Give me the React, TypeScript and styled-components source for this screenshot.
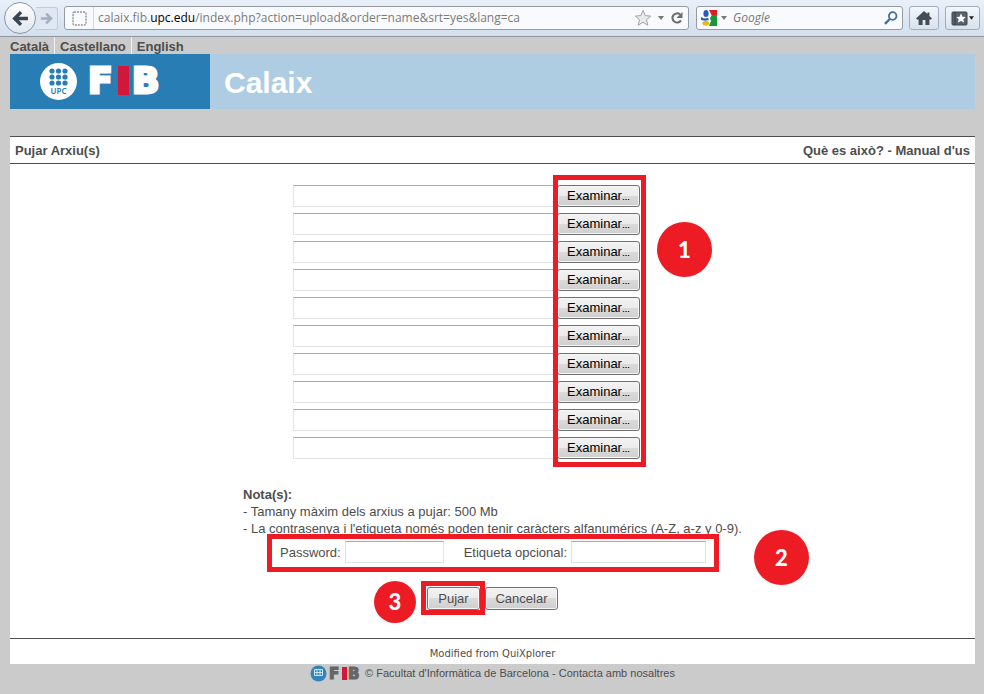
import React from "react";
import styled, { createGlobalStyle, css } from "styled-components";

const GlobalStyle = createGlobalStyle`
  * { box-sizing: border-box; }
  body {
    margin: 0;
    background: #cbcbcb;
    color: #4d4d4d;
    font: 13px/17px "Liberation Sans", Arial, sans-serif;
  }
  button, input { font: inherit; color: inherit; margin: 0; }
  a { color: inherit; text-decoration: none; }
`;

/* ---------- browser toolbar ---------- */

const Toolbar = styled.header`
  display: flex;
  align-items: center;
  height: 37px;
  padding: 0 4px;
  background: linear-gradient(#e9f0f9, #d3dfee);
  border-bottom: 1px solid #8d97a3;
`;

const BackButton = styled.button`
  display: grid;
  place-items: center;
  flex: none;
  width: 32px;
  height: 32px;
  padding: 0;
  border: 1px solid #8b95a5;
  border-radius: 50%;
  background: linear-gradient(#ffffff, #dfe6f0);
`;

const ForwardButton = styled.button`
  display: grid;
  place-items: center;
  flex: none;
  width: 22px;
  height: 23px;
  margin-right: 6px;
  padding: 0;
  border: 1px solid #c0cad8;
  border-left: 0;
  border-radius: 0 3px 3px 0;
  background: #dfe7f2;
`;

const Field = styled.div`
  display: flex;
  align-items: center;
  height: 24px;
  border: 1px solid #949ba5;
  border-radius: 3px;
  background: #f8fafd;
`;

const AddressField = styled(Field)`
  flex: 1;
  min-width: 0;
`;

const SearchField = styled(Field)`
  width: 207px;
  margin: 0 6px 0 7px;
  padding: 0 4px;
`;

const SiteIdentity = styled.span`
  display: grid;
  place-items: center;
  width: 29px;
  height: 22px;
  border-right: 1px solid #d5dae1;
`;

const Address = styled.div`
  flex: 1;
  min-width: 0;
  padding-left: 4px;
  overflow: hidden;
  white-space: nowrap;
  color: #7b7b7b;
  font: 12px/20px "Open Sans", "Noto Sans", sans-serif;
  b { font-weight: 400; color: #000; }
`;

const AddressIcons = styled.div`
  display: flex;
  align-items: center;
  gap: 6px;
  padding-right: 4px;
`;

const CaretSlot = styled.span`
  display: flex;
  margin-left: 4px;
`;

const SearchInput = styled.input`
  flex: 1;
  min-width: 0;
  padding: 0 0 0 6px;
  border: 0;
  background: none;
  outline: 0;
  && { font: italic 12px/20px "Open Sans", "Noto Sans", sans-serif; }
  &::placeholder { color: #777; opacity: 1; }
`;

const IconButton = styled.button`
  display: grid;
  place-items: center;
  flex: none;
  padding: 0;
  border: 0;
  background: none;
`;

const ToolButton = styled.button<{ $wide?: boolean }>`
  display: flex;
  align-items: center;
  justify-content: center;
  gap: 1px;
  flex: none;
  width: ${(p) => (p.$wide ? 35 : 30)}px;
  height: 24px;
  margin-right: ${(p) => (p.$wide ? 0 : 6)}px;
  padding: 0;
  border: 1px solid #a3adba;
  border-radius: 3px;
  background: linear-gradient(#f3f7fb, #d8e1ed);
`;

const Arrow = ({ color, size, flip }: { color: string; size: number; flip?: boolean }) => (
  <svg width={size} height={size} viewBox="0 0 16 16" fill="none" stroke={color} strokeWidth="3.2">
    <path d={flip ? "M1 8h12M7.5 2l6 6-6 6" : "M15 8H3M8.5 2l-6 6 6 6"} />
  </svg>
);

const Caret = ({ color = "#777", size = 6 }: { color?: string; size?: number }) => (
  <svg width={size} height="4" viewBox="0 0 6 4">
    <path d="M0 0h6L3 4z" fill={color} />
  </svg>
);

const StarIcon = () => (
  <svg width="18" height="18" viewBox="0 0 18 18">
    <path
      d="M9 1.5l2.2 5.1 5.5.5-4.2 3.6 1.3 5.5L9 13.3l-4.8 2.9 1.3-5.5L1.3 7.1l5.500-.5z"
      fill="#e8eaed"
      stroke="#a3a3a3"
    />
  </svg>
);

const ReloadIcon = () => (
  <svg width="14" height="14" viewBox="0 0 14 14">
    <path d="M10 3.4A4.6 4.6 0 1 0 11 9.4" fill="none" stroke="#6c6c6c" strokeWidth="2" />
    <path d="M12.5 1v6h-6z" fill="#6c6c6c" />
  </svg>
);

const GoogleIcon = () => (
  <svg width="16" height="16" viewBox="0 0 16 16">
    <path d="M0 0h16v16H0z" fill="#fff" />
    <path d="M8 0h8v6h-5z" fill="#db1f1f" />
    <path d="M11 5l5 0v11H8l2-5-1-3z" fill="#14983a" />
    <ellipse cx="5" cy="3.500" rx="2.600" ry="3.500" fill="#2a5bb8" />
    <path d="M0 7l3 1.500 4-.5 1 2-4 .8L0 10z" fill="#2a5bb8" />
    <ellipse cx="4.800" cy="13.300" rx="3.400" ry="2.500" fill="#e8b820" />
  </svg>
);

const SearchIcon = () => (
  <svg width="14" height="14" viewBox="0 0 14 14" fill="none" stroke="#3d6ea8">
    <circle cx="8.7" cy="5" r="3.8" strokeWidth="1.8" />
    <path d="M5.8 8L1 12.8" strokeWidth="2.4" />
  </svg>
);

const HomeIcon = () => (
  <svg width="16" height="14" viewBox="0 0 16 14" fill="#434b55">
    <path d="M8 0L0 7.4l1 1.2h1.6V14h4V9h2.8v5h4V8.600H15l1-1.200-2.600-2.400V1.500h-2v1.600z" />
  </svg>
);

const BookmarksIcon = () => (
  <svg width="17" height="15" viewBox="0 0 17 15">
    <rect x="1" y="1" width="15" height="13" rx="1" fill="#59626d" stroke="#3c444e" />
    <path d="M4 1v13" stroke="#353c45" />
    <path d="M10 2.500l1.500 3.200 3.300.3-2.500 2.200.8 3.400L10 9.900l-3.100 1.700.8-3.400L5.200 6l3.300-.3z" fill="#fff" />
  </svg>
);

const BrowserToolbar = () => (
  <Toolbar>
    <BackButton aria-label="Back"><Arrow color="#3a444f" size={17} /></BackButton>
    <ForwardButton aria-label="Forward"><Arrow color="#a3afbf" size={13} flip /></ForwardButton>
    <AddressField>
      <SiteIdentity>
        <svg width="15" height="15" viewBox="0 0 15 15">
          <rect x="1" y="1" width="13" height="13" rx="1" fill="none" stroke="#666" strokeDasharray="2 1" />
        </svg>
      </SiteIdentity>
      <Address>
        calaix.fib.<b>upc.edu</b>/index.php?action=upload&amp;order=name&amp;srt=yes&amp;lang=ca
      </Address>
      <AddressIcons>
        <IconButton aria-label="Bookmark"><StarIcon /></IconButton>
        <Caret />
        <IconButton aria-label="Reload"><ReloadIcon /></IconButton>
      </AddressIcons>
    </AddressField>
    <SearchField>
      <GoogleIcon />
      <CaretSlot><Caret /></CaretSlot>
      <SearchInput aria-label="Search" placeholder="Google" />
      <IconButton aria-label="Go"><SearchIcon /></IconButton>
    </SearchField>
    <ToolButton aria-label="Home"><HomeIcon /></ToolButton>
    <ToolButton $wide aria-label="Bookmarks"><BookmarksIcon /><Caret color="#222" size={5} /></ToolButton>
  </Toolbar>
);

/* ---------- page ---------- */

const Page = styled.div`
  padding: 0 9px 0 10px;
`;

const Languages = styled.nav`
  display: flex;
  height: 17px;
  font-weight: 700;
  line-height: 19px;
  a + a {
    margin-left: 5px;
    padding-left: 5px;
    border-left: 1px solid #f2f2f2;
  }
`;

const Banner = styled.div`
  display: flex;
  height: 55px;
  background: #aecde3;
`;

const Brand = styled.div`
  width: 200px;
  padding-left: 30px;
  background: #287db5;
`;

const Title = styled.h1`
  margin: 0;
  padding-left: 14px;
  color: #fff;
  font-size: 30px;
  line-height: 57px;
`;

const Panel = styled.main`
  margin-top: 27px;
  background: #fff;
  border-top: 1px solid #4d4d4d;
`;

const PanelHeader = styled.div`
  display: flex;
  justify-content: space-between;
  height: 27px;
  padding: 0 5px;
  border-bottom: 1px solid #4d4d4d;
  font-weight: 700;
  line-height: 27px;
`;

const Form = styled.form`
  width: 499px;
  margin: 0 auto;
  padding: 21px 0 28px;
`;

const FileList = styled.div`
  position: relative;
  display: grid;
  gap: 6px;
  width: 347px;
  margin-left: 50px;
`;

const FileRow = styled.div`
  display: flex;
  height: 22px;
`;

const inputFrame = css`
  border: 1px solid #e1e2e5;
  border-top-color: #a9abae;
  background: #fff;
  outline: 0;
`;

const PathInput = styled.input`
  ${inputFrame}
  flex: 1;
  min-width: 0;
`;

const Button = styled.button`
  padding: 0;
  border: 1px solid #707070;
  border-radius: 3px;
  background: linear-gradient(#f2f2f2 0%, #ebebeb 50%, #dadada 50%, #cfcfcf 100%);
  box-shadow: inset 0 0 0 1px #f6f6f6;
  white-space: nowrap;
`;

const BrowseButton = styled(Button)`
  width: 83px;
  && { color: #000; }
  small { font-size: 8px; font-weight: 700; }
`;

const Notes = styled.div`
  margin-top: 27px;
  white-space: nowrap;
`;

const Details = styled.div`
  position: relative;
  display: flex;
  align-items: center;
  width: fit-content;
  height: 22px;
  margin: 4px 0 0 37px;
`;

const DetailInput = styled.input<{ $width: number; $gap?: number }>`
  ${inputFrame}
  width: ${(p) => p.$width}px;
  height: 22px;
  margin: 0 ${(p) => p.$gap ?? 0}px 0 4px;
`;

const Actions = styled.div`
  display: flex;
  justify-content: center;
  gap: 5px;
  margin-top: 24px;
`;

const ActionButton = styled(Button)<{ $width: number }>`
  width: ${(p) => p.$width}px;
  height: 23px;
`;

const Marked = styled.div`
  position: relative;
  display: flex;
`;

const Highlight = styled.span<{ $inset: string }>`
  position: absolute;
  inset: ${(p) => p.$inset};
  border: 5px solid #ed1c24;
  pointer-events: none;
`;

const Step = styled.span<{ $size: number; $left: number; $top: number }>`
  position: absolute;
  left: ${(p) => p.$left}px;
  top: ${(p) => p.$top}px;
  width: ${(p) => p.$size}px;
  height: ${(p) => p.$size}px;
  border-radius: 50%;
  background: #ed1c24;
  color: #fff;
  text-align: center;
  font: 900 22px/${(p) => p.$size}px Lato, sans-serif;
`;

const Credit = styled.div`
  padding: 8px 0 3px;
  border-top: 1px solid #4d4d4d;
  text-align: center;
  font: 10px/14px "DejaVu Sans", Verdana, sans-serif;
`;

const Footer = styled.footer`
  display: flex;
  align-items: center;
  justify-content: center;
  gap: 3px;
  height: 18px;
  font-size: 11px;
`;

const BrandLogo = () => (
  <svg width="124" height="55" viewBox="0 0 124 55" role="img" aria-label="UPC FIB">
    <circle cx="18.5" cy="27.5" r="18.5" fill="#fff" />
    {[17, 23, 29].map((y) =>
      [12, 18.5, 25].map((x) => <circle key={`${x}-${y}`} cx={x} cy={y} r="2.6" fill="#287db5" />)
    )}
    <text x="18.5" y="40" textAnchor="middle" fill="#287db5" fontFamily="Noto Sans" fontWeight="600" fontSize="8">UPC</text>
    <g fill="#fff" stroke="#fff" strokeWidth="3" fontFamily="DejaVu Sans" fontWeight="700" fontSize="36">
      <text x="48" y="39">F</text>
      <text x="92" y="39">B</text>
    </g>
    <rect x="78" y="12" width="11" height="29" fill="#d1173a" />
  </svg>
);

const FooterLogo = () => (
  <svg width="52" height="17" viewBox="0 0 52 17" role="img" aria-label="UPC FIB">
    <circle cx="8.5" cy="8.5" r="8" fill="#3284bd" />
    <path d="M4.500 4.500h8v6h-8zM4.500 7.500h8M7 4.500v6M10 4.500v6" fill="none" stroke="#cfe3f2" />
    <g fill="#666" stroke="#666" strokeWidth="1.2" fontFamily="DejaVu Sans" fontWeight="700" fontSize="15">
      <text x="19" y="14">F</text>
      <text x="38" y="14">B</text>
    </g>
    <rect x="32" y="2" width="5" height="13" fill="#d1173a" />
  </svg>
);

export default function App() {
  return (
    <>
      <GlobalStyle />
      <BrowserToolbar />
      <Page>
        <Languages>
          <a href="#ca">Català</a>
          <a href="#es">Castellano</a>
          <a href="#en">English</a>
        </Languages>
        <Banner>
          <Brand><BrandLogo /></Brand>
          <Title>Calaix</Title>
        </Banner>
        <Panel>
          <PanelHeader>
            <span>Pujar Arxiu(s)</span>
            <span><a href="#what">Què es això?</a> - <a href="#manual">Manual d'us</a></span>
          </PanelHeader>
          <Form onSubmit={(e) => e.preventDefault()}>
            <FileList>
              {Array.from({ length: 10 }, (_, i) => (
                <FileRow key={i}>
                  <PathInput aria-label={`Arxiu ${i + 1}`} />
                  <BrowseButton type="button">Examinar<small>…</small></BrowseButton>
                </FileRow>
              ))}
              <Highlight $inset="-10px -6px -8px 260px" />
              <Step $size={55} $left={364} $top={37}>1</Step>
            </FileList>
            <Notes>
              <b>Nota(s):</b>
              <div>- Tamany màxim dels arxius a pujar: 500 Mb</div>
              <div>- La contrasenya i l'etiqueta només poden tenir caràcters alfanumérics (A-Z, a-z y 0-9).</div>
            </Notes>
            <Details>
              <label htmlFor="password">Password:</label>
              <DetailInput id="password" type="password" $width={99} $gap={20} />
              <label htmlFor="tag">Etiqueta opcional:</label>
              <DetailInput id="tag" type="text" $width={135} />
              <Highlight $inset="-7px -13px -9px -13px" />
              <Step $size={55} $left={474} $top={-11}>2</Step>
            </Details>
            <Actions>
              <Marked>
                <ActionButton $width={53} type="submit">Pujar</ActionButton>
                <Highlight $inset="-6px -5px -5px -6px" />
                <Step $size={42} $left={-53} $top={-6}>3</Step>
              </Marked>
              <ActionButton $width={73} type="button">Cancelar</ActionButton>
            </Actions>
          </Form>
          <Credit>Modified from QuiXplorer</Credit>
        </Panel>
        <Footer>
          <FooterLogo />
          <span>© Facultat d'Informàtica de Barcelona - <a href="#contact">Contacta amb nosaltres</a></span>
        </Footer>
      </Page>
    </>
  );
}
